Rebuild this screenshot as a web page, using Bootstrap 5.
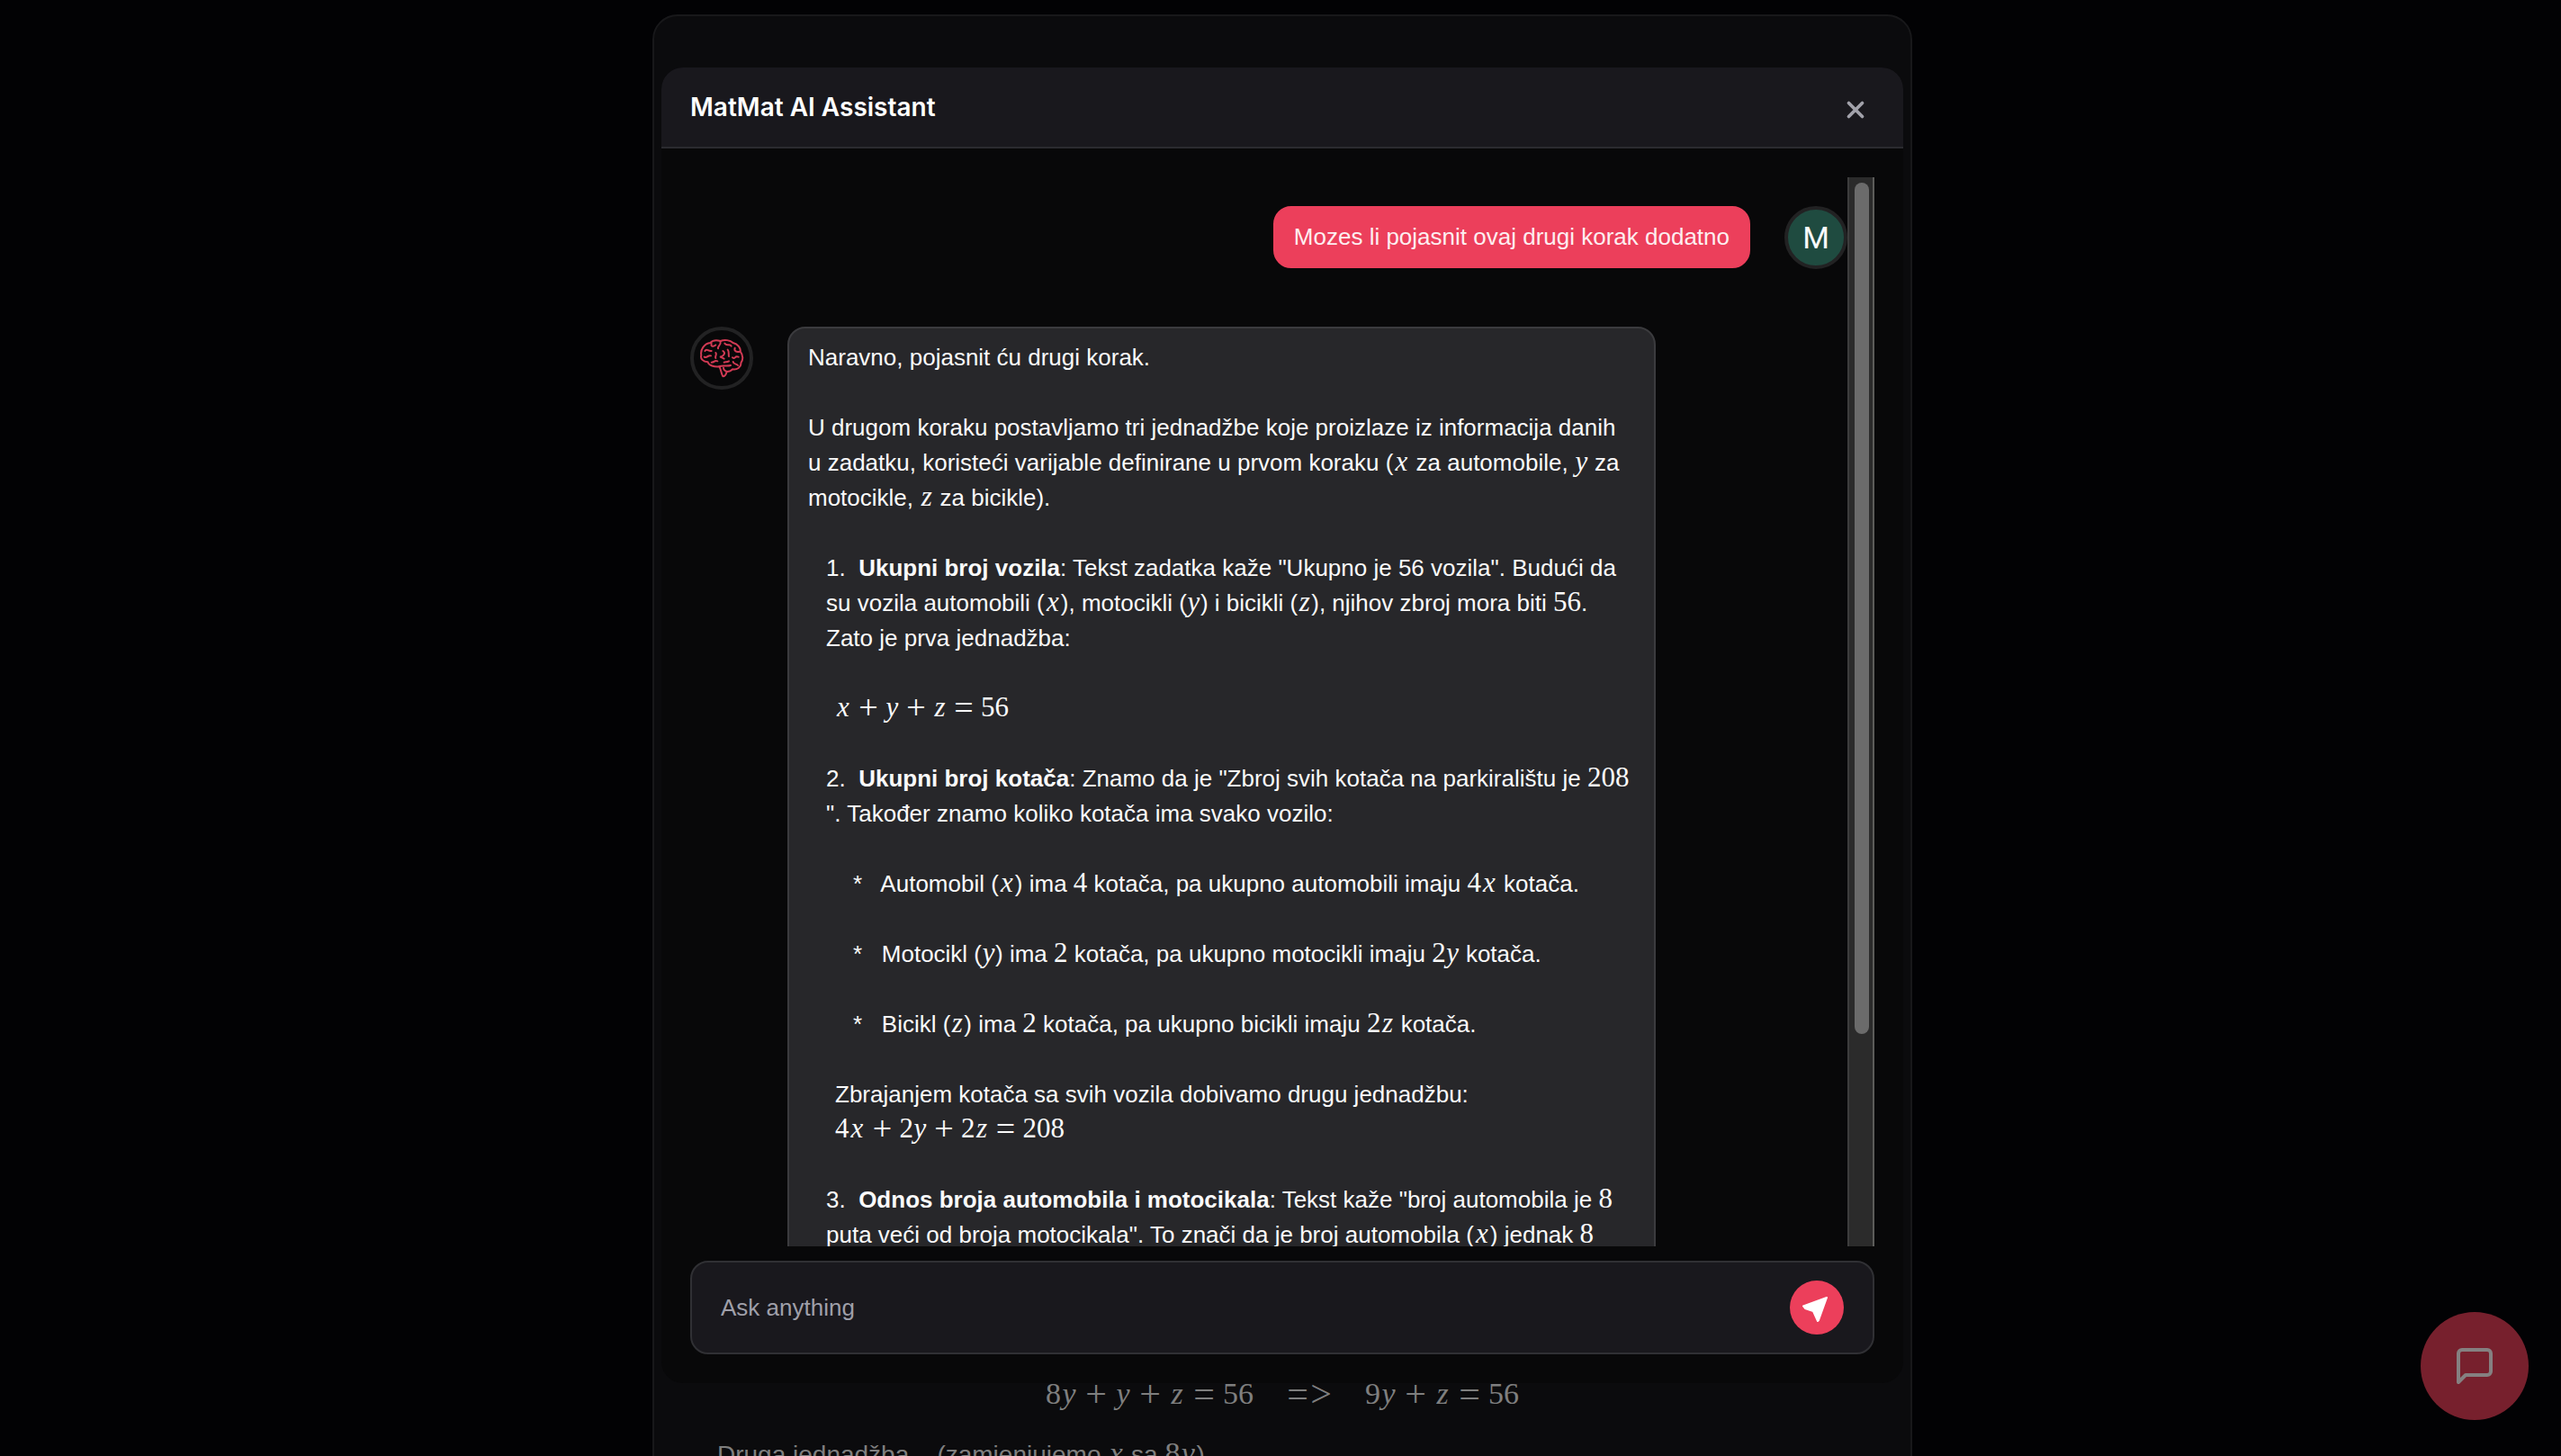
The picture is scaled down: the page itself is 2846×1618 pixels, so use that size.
<!DOCTYPE html>
<html lang="hr" data-bs-theme="dark">
<head>
<meta charset="utf-8">
<meta name="viewport" content="width=device-width, initial-scale=1">
<title>MatMat AI Assistant</title>
<link href="https://cdn.jsdelivr.net/npm/bootstrap@5.3.0/dist/css/bootstrap.min.css" rel="stylesheet">
<style>
  body { background: #020204; color: #fafafa; font: 26px/39px "Liberation Sans", Arial, sans-serif; overflow: hidden; }
  .page-wrap { padding: 16px 0 0 4px; }
  .lesson { width: 100%; max-width: 1400px; height: calc(100vh + 6px); background: #0b0b0d; border: 2px solid #18181a; border-radius: 28px 28px 0 0; color: #7f7f7f; font-size: 28px; line-height: 42px; padding: 0 70px; }
  .lesson .eq { font-size: 34px; line-height: 42px; margin-bottom: 30px; gap: 36px; }
  .assistant-modal { padding: 75px 0 81px 4px; }
  .assistant-modal .modal-dialog { max-width: 1380px; height: 100%; margin: 0 auto; }
  .assistant-modal .modal-content { height: 100%; background: #080809; border: 0; border-radius: 24px; color: #fafafa; overflow: hidden; }
  .assistant-modal .modal-header { height: 90px; padding: 0 32px; background: #19181d; border-bottom: 2px solid #2b2b2f; border-radius: 0; }
  .assistant-title { font: 600 28px/42px Inter, "Liberation Sans", sans-serif; margin: 0; }
  .icon-btn { background: none; border: 0; padding: 0; line-height: 0; color: #a1a1aa; }
  .close-btn { margin: 6px 6px 0 0; }
  .assistant-modal .modal-body { padding: 32px; min-height: 0; }
  .thread { flex: 1 1 0; min-height: 0; overflow: hidden; }
  .msg { gap: 38px; padding: 32px 0; }
  .avatar { width: 70px; height: 70px; flex: none; border: 4px solid #222223; border-radius: 50%; }
  .avatar-user { background: #1f4b40; font: 34px/1 Roboto, sans-serif; }
  .bubble { padding: 13px 21px; border: 2px solid #3b3b3e; border-radius: 20px; background: #27272a; max-width: 75%; }
  .bubble-user { background: #ec3f5b; border-color: #ec3f5b; color: #fdeef0; }
  .bubble p { margin: 0 0 39px; }
  .in-1 { padding-left: 20px; }
  .in-2 { padding-left: 30px; }
  .in-3 { padding-left: 50px; }
  .fx { font-family: "Liberation Serif", "Times New Roman", serif; font-size: 31px; line-height: 1; white-space: nowrap; }
  .fx i, .fx b { display: inline-block; text-align: center; width: 15px; line-height: 1; }
  .fx i.vx { width: 18px; }
  .fx b { width: 24px; margin: 0 7px; font-weight: 400; font-size: 38px; line-height: 20px; vertical-align: -3px; }
  .lesson .fx { font-size: 34px; }
  .lesson .fx i { width: 18px; }
  .lesson .fx b { width: 26px; margin: 0 8px; font-size: 42px; }
  .lesson .fx b.tight { margin: 0; }
  .scroll-track { width: 30px; flex: none; background: #2b2b2b; border-left: 2px solid #3d3d3d; border-right: 2px solid #5c5c5a; padding: 6px 4px 0 6px; }
  .scroll-thumb { width: 16px; height: 80%; background: #6b6b6b; border-radius: 8px; }
  .ask { height: 104px; margin-top: 16px; padding: 0 32px; background: #19181d; border: 2px solid #303034; border-radius: 20px; }
  .ask input { font-size: 26px; line-height: 39px; color: #fafafa; padding: 0; }
  .ask input::placeholder { color: #9f9fa9; opacity: 1; }
  .send-btn { width: 60px; height: 60px; flex: none; border-radius: 50%; background: #ec3f5b; color: #fff; }
  .chat-fab { right: 36px; bottom: 40px; width: 120px; height: 120px; border-radius: 50%; background: #77202d; color: #858081; }
</style>
<script src="https://cdn.jsdelivr.net/npm/bootstrap@5.3.0/dist/js/bootstrap.bundle.min.js"></script>
</head>
<body>
<main class="page-wrap d-flex justify-content-center">
  <section class="lesson d-flex flex-column justify-content-end">
    <div class="eq d-flex justify-content-center align-items-baseline"><span class="fx">8<i>y</i><b>+</b><i>y</i><b>+</b><i>z</i><b>=</b>56</span><span class="fx"><b class="tight">=</b><b class="tight">&gt;</b></span><span class="fx">9<i>y</i><b>+</b><i>z</i><b>=</b>56</span></div>
    <p class="mb-0">Druga jednadžba,&nbsp;&nbsp; (zamjenjujemo <span class="fx"><i>x</i></span> sa <span class="fx">8<i>y</i></span>)</p>
  </section>
</main>

<button class="icon-btn chat-fab position-fixed d-flex align-items-center justify-content-center" type="button" aria-label="Chat">
  <svg width="48" height="48" viewBox="0 0 24 24" fill="none" stroke="currentColor" stroke-width="2" stroke-linecap="round" stroke-linejoin="round"><path d="M21 15a2 2 0 0 1-2 2H7l-4 4V5a2 2 0 0 1 2-2h14a2 2 0 0 1 2 2z"/></svg>
</button>

<div class="modal assistant-modal d-block" role="dialog" aria-labelledby="assistantTitle">
  <div class="modal-dialog">
    <div class="modal-content">
      <header class="modal-header d-flex justify-content-between">
        <h1 class="assistant-title" id="assistantTitle">MatMat AI Assistant</h1>
        <button class="icon-btn close-btn" type="button" aria-label="Close">
          <svg width="30" height="30" viewBox="0 0 24 24" fill="none" stroke="currentColor" stroke-width="3" stroke-linecap="round"><path d="M6 6l12 12M18 6L6 18"/></svg>
        </button>
      </header>
      <div class="modal-body d-flex flex-column">
        <div class="thread d-flex">
          <div class="flex-grow-1">
            <div class="msg d-flex justify-content-end align-items-start">
              <div class="bubble bubble-user">Mozes li pojasnit ovaj drugi korak dodatno</div>
              <div class="avatar avatar-user d-flex align-items-center justify-content-center">M</div>
            </div>
            <div class="msg d-flex align-items-start">
              <div class="avatar d-flex align-items-center justify-content-center">
                <svg width="50" height="44" viewBox="111 80 150 132" fill="none" stroke="#d23a54" stroke-width="6" stroke-linecap="round" stroke-linejoin="round">
                  <path d="M118 136C114 118 128 97 148 95C158 84 172 86 182 89C196 83 214 86 224 95C240 98 250 113 248 124C258 136 258 152 250 162C252 176 236 186 222 183C216 190 210 191 203 191C201 199 199 207 190 207C184 197 184 184 178 174C162 176 142 170 140 159C124 158 114 148 118 136Z"/>
                  <path d="M130 122C136 112 140 124 152 122M128 142C138 148 140 134 150 138M152 98C148 108 160 108 166 102M182 90C184 104 172 104 174 114M196 97C204 108 214 96 218 106M190 122C200 128 194 138 182 142M182 142L194 148M206 118C212 124 208 134 210 140M230 112C226 124 236 126 246 124M222 144C232 152 228 136 242 142M152 160C164 160 160 152 172 156M178 174C188 168 204 174 216 170M224 158C226 168 236 164 240 170M166 128C172 134 162 140 166 146M204 191C196 188 192 184 192 178M210 156C204 160 198 158 194 160"/>
                </svg>
              </div>
              <div class="bubble">
                <p>Naravno, pojasnit ću drugi korak.</p>
                <p>U drugom koraku postavljamo tri jednadžbe koje proizlaze iz informacija danih<br>u zadatku, koristeći varijable definirane u prvom koraku (<span class="fx"><i class="vx">x</i></span> za automobile, <span class="fx"><i>y</i></span> za motocikle, <span class="fx"><i>z</i></span> za bicikle).</p>
                <p class="in-1">1.&nbsp; <strong>Ukupni broj vozila</strong>: Tekst zadatka kaže "Ukupno je 56 vozila". Budući da su vozila automobili (<span class="fx"><i class="vx">x</i></span>), motocikli (<span class="fx"><i>y</i></span>) i bicikli (<span class="fx"><i>z</i></span>), njihov zbroj mora biti <span class="fx">56</span>.<br>Zato je prva jednadžba:</p>
                <p class="in-2"><span class="fx"><i class="vx">x</i><b>+</b><i>y</i><b>+</b><i>z</i><b>=</b>56</span></p>
                <p class="in-1">2.&nbsp; <strong>Ukupni broj kotača</strong>: Znamo da je "Zbroj svih kotača na parkiralištu je <span class="fx">208</span><br>". Također znamo koliko kotača ima svako vozilo:</p>
                <p class="in-3">*&nbsp;&nbsp; Automobil (<span class="fx"><i class="vx">x</i></span>) ima <span class="fx">4</span> kotača, pa ukupno automobili imaju <span class="fx">4<i class="vx">x</i></span> kotača.</p>
                <p class="in-3">*&nbsp;&nbsp; Motocikl (<span class="fx"><i>y</i></span>) ima <span class="fx">2</span> kotača, pa ukupno motocikli imaju <span class="fx">2<i>y</i></span> kotača.</p>
                <p class="in-3">*&nbsp;&nbsp; Bicikl (<span class="fx"><i>z</i></span>) ima <span class="fx">2</span> kotača, pa ukupno bicikli imaju <span class="fx">2<i>z</i></span> kotača.</p>
                <p class="in-2">Zbrajanjem kotača sa svih vozila dobivamo drugu jednadžbu:<br><span class="fx">4<i class="vx">x</i><b>+</b>2<i>y</i><b>+</b>2<i>z</i><b>=</b>208</span></p>
                <p class="in-1">3.&nbsp; <strong>Odnos broja automobila i motocikala</strong>: Tekst kaže "broj automobila je <span class="fx">8</span> puta veći od broja motocikala". To znači da je broj automobila (<span class="fx"><i class="vx">x</i></span>) jednak <span class="fx">8</span></p>
              </div>
            </div>
          </div>
          <div class="scroll-track"><div class="scroll-thumb"></div></div>
        </div>
        <form class="ask d-flex align-items-center">
          <input class="form-control border-0 bg-transparent shadow-none" type="text" placeholder="Ask anything" aria-label="Ask anything">
          <button class="icon-btn send-btn d-flex align-items-center justify-content-center" type="submit" aria-label="Send">
            <svg width="32" height="32" viewBox="0 0 32 32" fill="currentColor" stroke="currentColor" stroke-width="2" stroke-linejoin="round"><path d="M27 5L1 14.500L3 17L12 20L17 31L18 30Z"/></svg>
          </button>
        </form>
      </div>
    </div>
  </div>
</div>
</body>
</html>
